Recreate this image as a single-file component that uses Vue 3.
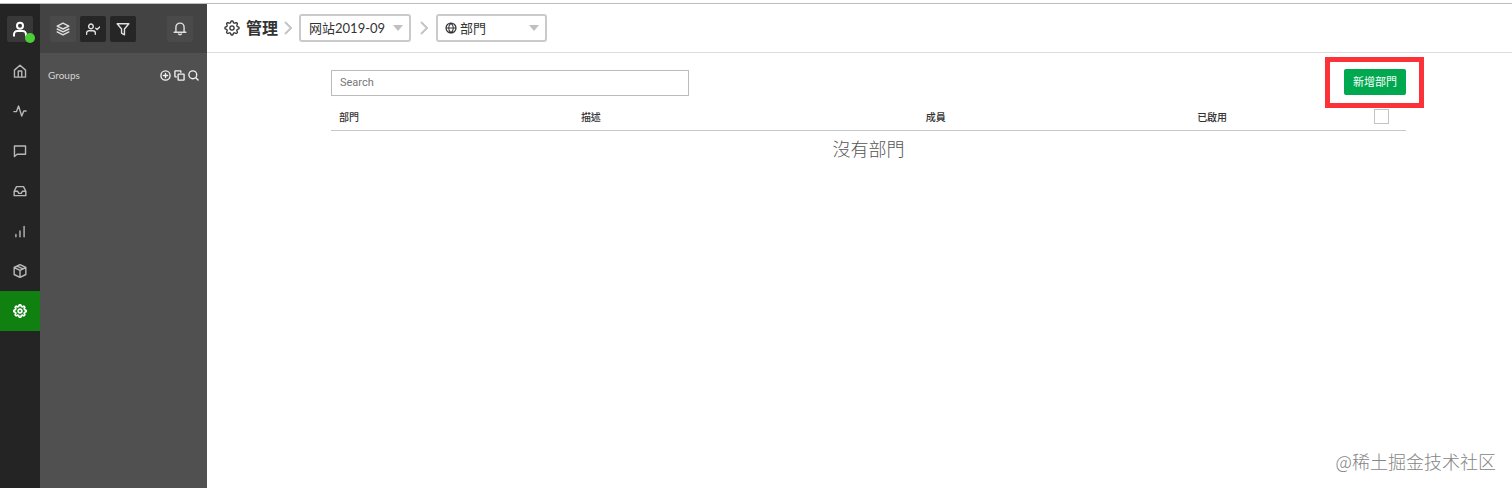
<script setup>
import { ref } from 'vue'

const site = ref('site')
const section = ref('groups')
const query = ref('')

function lobes(base, depth) {
  const points = []
  for (let i = 0; i < 96; i++) {
    const a = (i / 96) * Math.PI * 2
    const wave = Math.cos(8 * a)
    const r = base + depth * Math.tanh(2 * wave)
    points.push(`${(12 + r * Math.cos(a)).toFixed(2)} ${(12 + r * Math.sin(a)).toFixed(2)}`)
  }
  return `M${points.join('L')}Z`
}

const gear = lobes(9.3, 1.3) + 'M15.2 12a3.2 3.2 0 1 1-6.4 0a3.2 3.2 0 1 1 6.4 0Z'

const nav = [
  { name: 'Home', d: 'M2.500 10.500 12 2l9.500 8.500V22.500h-19ZM9 22.500V12h6v10.500' },
  { name: 'Activity', d: 'M1.500 13H6l3.500-9.500 5.500 17 3.500-8.500h4' },
  { name: 'Chats', d: 'M2.500 3.500h19v14H7l-4.500 4Z' },
  { name: 'Inbox', d: 'M2 12.500 6 4.500h12l4 8v7.500H2ZM2 12.500h6l2 3.500h4l2-3.500h6' },
  { name: 'Reports', d: 'M5 22v-4M12 22V12M19 22V4' },
  { name: 'Packages', d: 'M12 1l10 5v12l-10 5-10-5V6ZM2 6l10 5 10-5M12 11v12M7 3.500l10 5' },
  { name: 'Settings', d: gear, active: true }
]

const user = 'M16.500 7a4.500 4.500 0 1 1-9 0a4.500 4.500 0 1 1 9 0ZM3 22v-2a5 5 0 0 1 5-5h8a5 5 0 0 1 5 5v2'
const tools = [
  { name: 'Layers', d: 'M12 2l10 5-10 5L2 7ZM2 12l10 5 10-5M2 17l10 5 10-5' },
  { name: 'Assigned', dark: true, d: 'M12.500 7.500a4 4 0 1 1-8 0a4 4 0 1 1 8 0ZM1 21v-2a4 4 0 0 1 4-4h7a4 4 0 0 1 4 4v2M16.500 10.500l2.500 2.500 4.500-4.500' },
  { name: 'Filter', dark: true, d: 'M2 3h20l-7.500 9v10l-5-3v-7Z' }
]
const bell = 'M2 17.500h20M5 17.500V9a7 7 0 0 1 14 0v8.500M9.500 20.500a3 3 0 0 0 5 0'
const groupTools = [
  { name: 'Add group', d: 'M22 12a10 10 0 1 1-20 0a10 10 0 1 1 20 0ZM12 7.500v9M7.500 12h9' },
  { name: 'Copy group', d: 'M10 9h11a1 1 0 0 1 1 1v11a1 1 0 0 1-1 1H10a1 1 0 0 1-1-1V10a1 1 0 0 1 1-1ZM5 15H3a1 1 0 0 1-1-1V3a1 1 0 0 1 1-1h11a1 1 0 0 1 1 1v2' },
  { name: 'Search groups', d: 'M19 10.500a8.500 8.500 0 1 1-17 0a8.500 8.500 0 1 1 17 0ZM17 17l5 5' }
]
const globe = 'M22 12a10 10 0 1 1-20 0a10 10 0 1 1 20 0ZM2 12h20M12 2c-6 6-6 14 0 20c6-6 6-14 0-20Z'
</script>

<template>
  <div class="app">
    <nav class="rail" aria-label="Main">
      <button class="avatar" type="button" aria-label="Profile">
        <svg class="icon large bold" viewBox="0 0 24 24"><path :d="user" /></svg>
        <span class="status"></span>
      </button>
      <a v-for="item in nav" :key="item.name" class="rail-item" :class="{ active: item.active }" href="#" :aria-label="item.name">
        <svg class="icon" viewBox="0 0 24 24"><path :d="item.d" /></svg>
      </a>
    </nav>

    <aside class="side">
      <div class="side-top">
        <button v-for="tool in tools" :key="tool.name" class="tool" :class="{ dark: tool.dark }" type="button" :aria-label="tool.name">
          <svg class="icon" viewBox="0 0 24 24"><path :d="tool.d" /></svg>
        </button>
        <button class="tool bell" type="button" aria-label="Notifications">
          <svg class="icon" viewBox="0 0 24 24"><path :d="bell" /></svg>
        </button>
      </div>
      <div class="groups">
        <span>Groups</span>
        <div class="group-tools">
          <button v-for="tool in groupTools" :key="tool.name" type="button" :aria-label="tool.name">
            <svg class="icon small" viewBox="0 0 24 24"><path :d="tool.d" /></svg>
          </button>
        </div>
      </div>
    </aside>

    <main class="main">
      <header class="crumbs">
        <svg class="icon large thin" viewBox="0 0 24 24"><path :d="gear" /></svg>
        <h1>管理</h1>
        <svg class="chevron" viewBox="0 0 8 14"><path d="M1 1l6 6-6 6" /></svg>
        <div class="picker">
          <select v-model="site" aria-label="Site">
            <option value="site">网站2019-09</option>
          </select>
          <svg class="arrow" viewBox="0 0 10 6"><path d="M0 0h10L5 6Z" /></svg>
        </div>
        <svg class="chevron wide" viewBox="0 0 8 14"><path d="M1 1l6 6-6 6" /></svg>
        <div class="picker with-icon">
          <select v-model="section" aria-label="Section">
            <option value="groups">部門</option>
          </select>
          <svg class="icon globe" viewBox="0 0 24 24"><path :d="globe" /></svg>
          <svg class="arrow" viewBox="0 0 10 6"><path d="M0 0h10L5 6Z" /></svg>
        </div>
      </header>

      <section class="content">
        <div class="actions">
          <input v-model="query" class="search" type="text" placeholder="Search" aria-label="Search" />
          <div class="highlight">
            <button class="add" type="button">新增部門</button>
          </div>
        </div>
        <table>
          <colgroup>
            <col class="c-name" /><col class="c-desc" /><col class="c-members" /><col class="c-enabled" /><col class="c-check" />
          </colgroup>
          <thead>
            <tr>
              <th>部門</th>
              <th>描述</th>
              <th class="center">成員</th>
              <th class="center">已啟用</th>
              <th class="center"><input class="check" type="checkbox" aria-label="Select all" /></th>
            </tr>
          </thead>
          <tbody>
            <tr><td colspan="5">沒有部門</td></tr>
          </tbody>
        </table>
      </section>
      <p class="credit">@稀土掘金技术社区</p>
    </main>
  </div>
</template>

<style>
body {
  background: #fff;
}
</style>

<style scoped>
.app {
  box-sizing: border-box;
  display: flex;
  min-height: 100vh;
  padding-top: 4px;
  background: linear-gradient(#fff 3px, #bdbdbd 3px, #bdbdbd 4px, #fff 4px);
  font-family: Lato, "Noto Sans CJK TC", sans-serif;
  color: #333;
}
button,
input,
select {
  margin: 0;
  padding: 0;
  border: 0;
  font-family: inherit;
  color: inherit;
}
.icon {
  display: block;
  width: 14px;
  height: 14px;
  fill: none;
  stroke: currentColor;
  stroke-width: 2.4;
  stroke-linejoin: round;
  stroke-linecap: round;
}
.large {
  width: 16px;
  height: 16px;
}
.small {
  width: 11px;
  height: 11px;
  stroke-width: 3;
}
.bold {
  stroke-width: 3;
}
.thin {
  stroke-width: 2;
}
.rail {
  display: flex;
  flex-direction: column;
  flex: none;
  width: 40px;
  background: #242424;
}
.avatar {
  position: relative;
  display: grid;
  place-items: center;
  width: 26px;
  height: 26px;
  margin: 12px 7px 9px;
  border-radius: 2px;
  background: #383838;
  color: #fff;
}
.status {
  position: absolute;
  right: -2px;
  bottom: -1px;
  width: 10px;
  height: 10px;
  border-radius: 50%;
  background: #4cce36;
}
.rail-item {
  display: grid;
  place-items: center;
  height: 40px;
  color: #b8b8b8;
}
.rail-item.active {
  background: #108010;
  color: #fff;
}
.active .icon {
  stroke-width: 3;
}
.side {
  flex: none;
  width: 167px;
  background: #505050;
}
.side-top {
  box-sizing: border-box;
  display: flex;
  align-items: center;
  gap: 4px;
  height: 49px;
  padding: 0 14px 0 10px;
  background: #434343;
}
.tool {
  display: grid;
  place-items: center;
  width: 26px;
  height: 26px;
  border-radius: 2px;
  background: #4a4a4a;
  color: #e0e0e0;
}
.tool.dark {
  background: #262626;
}
.bell {
  margin-left: auto;
}
.groups {
  display: flex;
  align-items: center;
  justify-content: space-between;
  height: 44px;
  padding: 0 8px;
  font-size: 10px;
  color: #d5d5d5;
}
.group-tools {
  display: flex;
  gap: 3px;
}
.group-tools button {
  background: none;
  color: #f0f0f0;
}
.main {
  display: flex;
  flex: 1;
  flex-direction: column;
  min-width: 0;
}
.crumbs {
  display: flex;
  align-items: center;
  height: 48px;
  padding-left: 17px;
  border-bottom: 1px solid #ddd;
}
h1 {
  margin: 0 6px;
  font-size: 16px;
  line-height: 24px;
  font-weight: 700;
}
.chevron {
  width: 8px;
  height: 14px;
  fill: none;
  stroke: #c4c4c4;
  stroke-width: 2;
}
.chevron.wide {
  margin: 0 8px 0 9px;
}
.picker {
  display: grid;
  align-items: center;
  width: 112px;
}
.chevron + .picker {
  margin-left: 7px;
}
.chevron.wide + .picker {
  width: 111px;
  margin-left: 0;
}
.picker > * {
  grid-area: 1 / 1;
}
select {
  appearance: none;
  box-sizing: border-box;
  width: 100%;
  height: 28px;
  padding: 0 20px 0 8px;
  border: 2px solid #cacaca;
  border-radius: 3px;
  background: #fff;
  font-size: 13px;
  line-height: 20px;
}
.picker .arrow {
  justify-self: end;
  width: 10px;
  height: 6px;
  margin-right: 8px;
  fill: #c0c0c0;
  pointer-events: none;
}
.with-icon select {
  padding-left: 22px;
}
.globe {
  width: 12px;
  height: 12px;
  margin-left: 9px;
  pointer-events: none;
}
.content {
  padding: 4px 106px 0 124px;
}
.actions {
  display: flex;
  align-items: center;
  justify-content: space-between;
}
.search {
  box-sizing: border-box;
  width: 33.33%;
  height: 26px;
  padding: 0 8px;
  border: 1px solid #bbb;
  background: #fff;
  font-family: Roboto, sans-serif;
  font-size: 11px;
}
.search::placeholder {
  color: #777;
}
.highlight {
  margin-right: -18px;
  padding: 7px 13px 8px 14px;
  border: 5px solid #fb3338;
}
.add {
  display: block;
  height: 26px;
  padding: 0 9px;
  border-radius: 2px;
  background: #00a94f;
  color: #fff;
  font-size: 11px;
  line-height: 16px;
}
table {
  width: 100%;
  border-collapse: collapse;
  table-layout: fixed;
}
.c-name {
  width: 22.5%;
}
.c-desc {
  width: 22.5%;
}
.c-members {
  width: 22.5%;
}
.c-enabled {
  width: 28%;
}
.c-check {
  width: 4.5%;
}
th {
  height: 22px;
  padding: 0 8px 6px;
  border-bottom: 1px solid #c8c8c8;
  box-sizing: border-box;
  text-align: left;
  vertical-align: bottom;
  font-size: 10px;
  line-height: 14px;
  font-weight: 500;
}
th.center {
  padding: 0 0 6px;
  text-align: center;
}
th:nth-child(4) {
  padding-left: 10px;
}
.check {
  display: block;
  appearance: none;
  box-sizing: border-box;
  width: 15px;
  height: 15px;
  margin: 0 auto;
  border: 1px solid #c4c4c4;
  background: #fff;
}
td {
  padding: 4px 0;
  text-align: center;
  font-size: 18px;
  line-height: 28px;
  font-weight: 300;
  color: #555;
}
.credit {
  margin: auto 16px 14px auto;
  font-family: "Noto Sans CJK SC", sans-serif;
  font-size: 18px;
  line-height: 26px;
  font-weight: 300;
  color: #858585;
}
</style>
